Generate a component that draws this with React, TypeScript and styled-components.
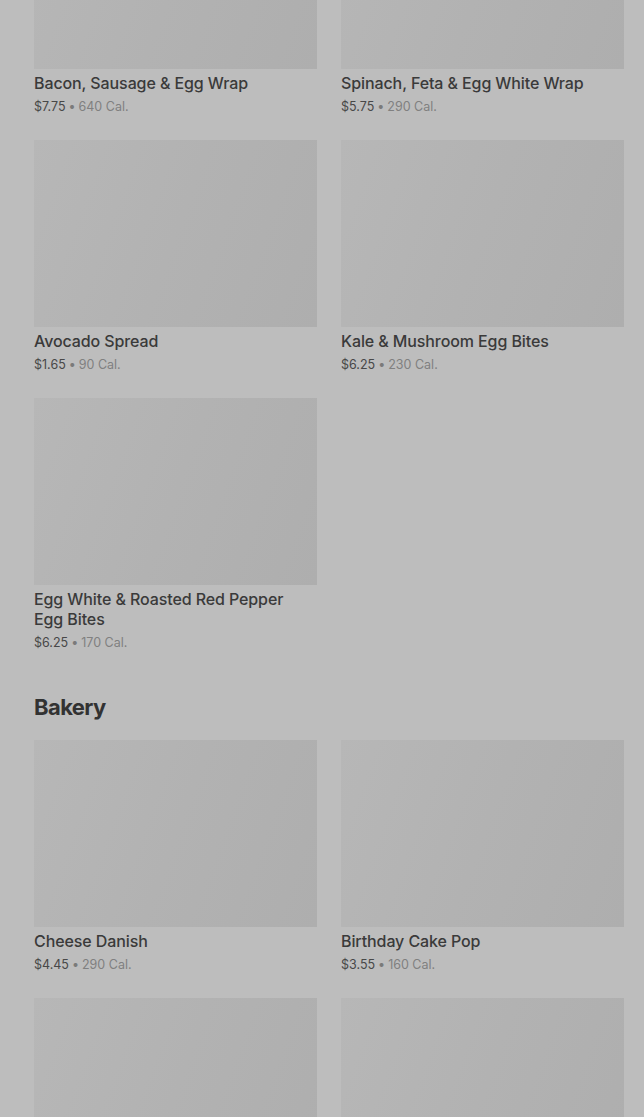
import React from "react";
import styled, { createGlobalStyle } from "styled-components";

type Item = { name: string; price: string; cal: string };

const sections: { title?: string; items: Item[] }[] = [
  {
    items: [
      { name: "Bacon, Sausage & Egg Wrap", price: "$7.75", cal: "640 Cal." },
      { name: "Spinach, Feta & Egg White Wrap", price: "$5.75", cal: "290 Cal." },
      { name: "Avocado Spread", price: "$1.65", cal: "90 Cal." },
      { name: "Kale & Mushroom Egg Bites", price: "$6.25", cal: "230 Cal." },
      { name: "Egg White & Roasted Red Pepper Egg Bites", price: "$6.25", cal: "170 Cal." }
    ]
  },
  {
    title: "Bakery",
    items: [
      { name: "Cheese Danish", price: "$4.45", cal: "290 Cal." },
      { name: "Birthday Cake Pop", price: "$3.55", cal: "160 Cal." },
      { name: "Butter Croissant", price: "$3.45", cal: "260 Cal." },
      { name: "Blueberry Muffin", price: "$3.45", cal: "360 Cal." }
    ]
  }
];

const GlobalStyle = createGlobalStyle`
  html, body {
    margin: 0;
    padding: 0;
    background: #bdbdbd;
    overflow: hidden;
  }
  body {
    font-family: Inter, "Noto Sans", sans-serif;
    -webkit-font-smoothing: antialiased;
  }
`;

const App: React.FC = () => {
  return (
    <Page>
      <GlobalStyle />
      <MenuList>
        {sections.map((section, i) => (
          <Section key={i}>
            {section.title && <SectionTitle>{section.title}</SectionTitle>}
            <Grid>
              {section.items.map((item) => (
                <Card key={item.name}>
                  <Thumb />
                  <Name>{item.name}</Name>
                  <Meta>
                    <Price>{item.price}</Price>
                    <Dot>•</Dot>
                    <Cal>{item.cal}</Cal>
                  </Meta>
                </Card>
              ))}
            </Grid>
          </Section>
        ))}
      </MenuList>
    </Page>
  );
};

const Page = styled.div`
  width: 644px;
  height: 1117px;
  overflow: hidden;
  background: #bdbdbd;
`;

/* list is scrolled: first row of images sits above the fold */
const MenuList = styled.div`
  margin-top: -118px;
  padding: 0 20px 0 34px;
  display: flex;
  flex-direction: column;
  gap: 40px;
`;

const Section = styled.section`
  display: flex;
  flex-direction: column;
`;

const SectionTitle = styled.h2`
  margin: 0 0 19px;
  font-size: 22px;
  line-height: 28px;
  font-weight: 700;
  letter-spacing: -0.6px;
  color: #323232;
`;

const Grid = styled.div`
  display: grid;
  grid-template-columns: 283px 283px;
  column-gap: 24px;
  row-gap: 23px;
  align-items: start;
`;

const Card = styled.div`
  display: flex;
  flex-direction: column;
`;

const Thumb = styled.div`
  width: 283px;
  height: 187px;
  background: linear-gradient(110deg, #b7b7b7 0%, #b2b2b2 50%, #aeaeae 100%);
`;

const Name = styled.div`
  margin-top: 4px;
  padding-right: 16px;
  font-size: 16px;
  line-height: 20px;
  font-weight: 500;
  color: #3a3a3a;
  letter-spacing: -0.1px;
`;

const Meta = styled.div`
  margin-top: 4px;
  font-size: 12.5px;
  line-height: 20px;
  display: flex;
  gap: 3px;
`;

const Price = styled.span`
  color: #484848;
`;

const Dot = styled.span`
  color: #7a7a7a;
`;

const Cal = styled.span`
  color: #808080;
`;

export default App;
